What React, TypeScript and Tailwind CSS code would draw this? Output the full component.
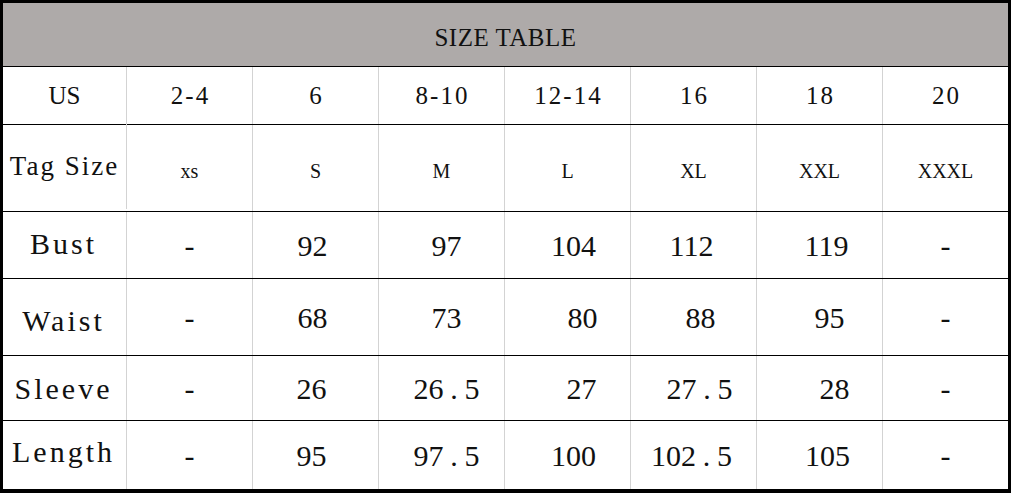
import React from 'react';

type Cell = { v: string; cls?: string };

const serif = "font-['Liberation_Serif',serif]";

const Value: React.FC<{ v: string }> = ({ v }) => {
  // the period in the source table is set wide
  if (!v.includes('.')) return <>{v}</>;
  const [a, b] = v.split('.');
  return (
    <>
      {a}
      <span className="inline-block w-[21px] text-center">.</span>
      {b}
    </>
  );
};

const App: React.FC = () => {
  const usSizes = ['2-4', '6', '8-10', '12-14', '16', '18', '20'];
  const tagSizes = ['xs', 'S', 'M', 'L', 'XL', 'XXL', 'XXXL'];

  const measures: { label: string; h: string; labelCls: string; cells: Cell[] }[] = [
    {
      label: 'Bust',
      h: 'h-[67px]',
      labelCls: '-translate-y-[2px]',
      cells: [
        { v: '-' },
        { v: '92', cls: '-translate-x-[3px]' },
        { v: '97', cls: 'translate-x-[5px]' },
        { v: '104', cls: 'translate-x-[6px]' },
        { v: '112', cls: '-translate-x-[2px]' },
        { v: '119', cls: 'translate-x-[7px]' },
        { v: '-' },
      ],
    },
    {
      label: 'Waist',
      h: 'h-[77px]',
      labelCls: 'translate-y-[3px]',
      cells: [
        { v: '-' },
        { v: '68', cls: '-translate-x-[3px]' },
        { v: '73', cls: 'translate-x-[5px]' },
        { v: '80', cls: 'translate-x-[15px]' },
        { v: '88', cls: 'translate-x-[7px]' },
        { v: '95', cls: 'translate-x-[10px]' },
        { v: '-' },
      ],
    },
    {
      label: 'Sleeve',
      h: 'h-[65px]',
      labelCls: '',
      cells: [
        { v: '-' },
        { v: '26', cls: '-translate-x-[4px]' },
        { v: '26.5', cls: 'translate-x-[5px]' },
        { v: '27', cls: 'translate-x-[14px]' },
        { v: '27.5', cls: 'translate-x-[6px]' },
        { v: '28', cls: 'translate-x-[15px]' },
        { v: '-' },
      ],
    },
    {
      label: 'Length',
      h: 'h-[68px]',
      labelCls: '-translate-y-[4px]',
      cells: [
        { v: '-' },
        { v: '95', cls: '-translate-x-[4px]' },
        { v: '97.5', cls: 'translate-x-[5px]' },
        { v: '100', cls: 'translate-x-[6px]' },
        { v: '102.5', cls: '-translate-x-[2px]' },
        { v: '105', cls: 'translate-x-[8px]' },
        { v: '-' },
      ],
    },
  ];

  const grid = 'grid grid-cols-[124px_repeat(6,126px)_125px]';
  const cell = 'flex items-center justify-center border-r border-[#d3d3d3] last:border-r-0';

  return (
    <div className={`w-[1011px] h-[493px] bg-white text-[#111] ${serif}`}>
      <div className="h-full border-black border-t-[3px] border-x-[3px] border-b-[4px] flex flex-col">
        <div className="h-[64px] bg-[#aeaaa9] border-b border-black flex items-center justify-center pt-[6px] text-[25px] tracking-[0.5px]">
          SIZE TABLE
        </div>

        <div className={`${grid} h-[58px] border-b border-black text-[25px]`}>
          <div className={cell}>US</div>
          {usSizes.map((s, i) => (
            <div key={i} className={`${cell} tracking-[2px] pl-[2px]`}>
              {s}
            </div>
          ))}
        </div>

        <div className={`${grid} h-[87px] border-b border-black`}>
          <div className={`${cell} text-[27px] tracking-[2px] -translate-y-[2px]`}>Tag Size</div>
          {tagSizes.map((s, i) => (
            <div key={i} className={`${cell} text-[20px] pt-[6px]`}>
              {s}
            </div>
          ))}
        </div>

        {measures.map((row, ri) => (
          <div
            key={row.label}
            className={`${grid} ${row.h} ${ri < measures.length - 1 ? 'border-b border-black' : ''}`}
          >
            <div className={`${cell} text-[30px] tracking-[3px] pr-[2px]`}>
              <span className={row.labelCls}>{row.label}</span>
            </div>
            {row.cells.map((c, i) => (
              <div key={i} className={`${cell} text-[30px]`}>
                <span className={c.cls ?? ''}>
                  <Value v={c.v} />
                </span>
              </div>
            ))}
          </div>
        ))}
      </div>
    </div>
  );
};

export default App;
